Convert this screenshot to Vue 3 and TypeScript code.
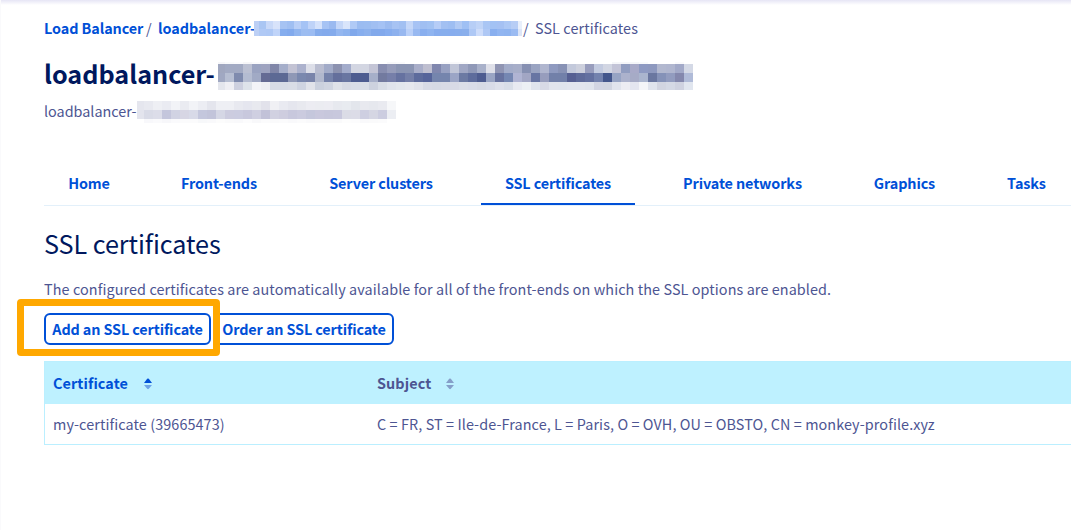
<script setup lang="ts">
interface Cell { x: number; y: number; w: number; h: number; fill: string }

function mosaic(rows: string[], ys: number[], first: number, size: number): Cell[] {
  return rows.flatMap((row, r) =>
    row.split(' ').map((c, i) => ({
      x: i === 0 ? 0 : first + (i - 1) * size,
      y: ys[r],
      w: i === 0 ? first : size,
      h: ys[r + 1] - ys[r],
      fill: '#' + c,
    })),
  )
}

const crumbCells = mosaic([
  'bdd0f5 aac6f3 c9d9f8 d8e3fa a6c3f3 a0bff2 b9cff7 a5c3f5 bfd3f8 d5e2fb a6c3f4 9bbaf0 c5d7f8 d9e5fb b0caf6 9bbcf1 9cbdf1 a1bff2 a5c2f4 9cbbf0 a7c3f3 a2c0f2 c5d7f8 a7c3f4 a0bff2 a2c2f3 b6cdf7 a2c0f2 9ebef2 b1caf4 9fc0f4 b7cef6 c0d4f7 aac6f4 a3c2f4 a5c1f3 adc8f5 b7cdf5 e8effb',
  'bdd0f5 b0c9f5 aec8f5 c0d4f9 85adee 82aaed 91b5ef 9dbdf1 9cbcf2 85acec 83aaec 84abec 94b7f0 8db3ef 80a8eb 87aeee 8cb1ed 82a9eb 82a9ec 86adef 8db1ee 98b8f0 bad0f8 98b9f1 89afef 8fb4f0 87adee 87aeed 87adee 88aeed 8aafec aec8f5 cddcfa afc8f5 89afef 91b5f1 8fb4f0 9bbbf2 dce5f7',
], [0, 8, 15], 5, 7)

const titleCells = mosaic([
  'f6f6f9 f9fafb fbfbfd f6f6f8 fafafc f8f9fb f7f8fa f8f9fb ffffff ffffff fafbfc ffffff f9fafb ffffff ffffff ffffff ffffff ffffff ffffff f8f8fa fafafc ffffff ffffff ffffff ffffff fafafc f9f9fb fafafb ffffff ffffff ffffff ffffff fafafc ffffff f8f9fa ffffff ffffff ffffff ffffff ffffff ffffff ffffff ffffff ffffff f5f6f9 f5f6f9 f5f6f9 f9fafb ffffff ffffff ffffff fafafc ffffff',
  'a0a7bf a2aac3 a2aac3 bbc0d2 9aa3c1 9ea3c0 8086a8 a5aeca c3c3d4 acb2cd dcdee8 b9bdd0 a2abc8 8c92b0 a3accb d3d6e2 d3d6e2 c4c5d6 888eb0 969cba 8b95b3 8b95b3 a9aec9 bfbfd0 8087ae 98a1c2 c1c6d8 a0a7c4 9099b8 a9b1ca dfe0e9 9095b3 a3acc9 a7aec9 8690b2 9aa4c2 b0b6cf 8f9ac0 8892b5 c3c9db cdd0dd 989dbd c3cbe0 d2d6e3 c3c4d7 919dc0 a8aac8 8e9ac2 8e99bf b2b8cf b0b6cf a2a9c8 d4d9e6',
  'a0a8c2 b6bed2 7f8bae b4bcd1 a1aac5 656b94 5c6994 5c6994 8f98b6 7a88ae 7984aa b1b8cd 7582aa 646f9c 6976a1 4d5c90 4d5c90 a6afc9 727a9f 767fa9 6672a0 747fa8 5d6b9c 56649a 7585ad 7585ad 9ba5c6 6c7aa3 5e6c9c 4e5c90 9aa5c4 67729f 7587b2 b0b4d3 a2a6c4 6775a3 979dbd 7280a9 7280a9 565f92 5e6a9a 6370a0 7382ae 43568c 97a4c4 acb2cc a6abc6 aab5ce 6a77a0 8592b8 929cbf 8488ad b0bbd8',
  'e4e6ed efeff4 cdd0df dee3ea f3f4f8 eeeff4 d7dce6 d7dce6 d9dde6 cfd4e1 e1e3ea cbd1de d0d5e1 dfe2e9 d8dbe5 d9dde7 dadee7 cdd2df d9dee7 e0e4ec e3e7ed e6e8ee e1e3eb d8dbe6 d6dae5 d8dbe6 d8dae6 dbdee8 d9dce8 d7dae5 d9dce8 dee1eb d9dee8 e8eaf1 edf0f4 dfe4ed d8dae6 e1e4ed e0e4ed e2e5ee e2e5ee e0e4ed d2d5e3 d1d5e1 e1e4ed ededf3 e4e6f0 f4f5f8 e0e4ed d2d5e1 d5d9e5 cfd2e0 e1e6ef',
], [0, 2, 11, 20, 28], 7, 9)

const nameCells = mosaic([
  'e5e6ee e8e9f0 eeeff4 eaebf2 f2f3f7 eaebf1 f2f3f7 ecedf3 e4e5ed eeeff4 eeeff4 e8e9f0 e5e6ef e8e9ef e2e2eb f0f0f4 e9eaf1 e5e6ee e8e9ef ececf2 ebecf1 ececf2 e7e9ef e8ebf0 e3e6ec e8e9ef e6e8ee e9eaf0 f6f7f9',
  'e3e4ed d9dbe7 dcdde9 c4c6dc d1d3e3 d7d6e4 d8dae8 c4c7dd c2c4da d5d7e5 ccccdf cbcce0 c8c8dd cfcfe1 c2c2d8 d1d1e1 cecddf c8c8dd cbcbdf c5c7dc c9c8dd c7c7dc c8c8dd dbdce6 dcdce7 cecfe1 d5d6e3 cccde0 eceef3',
  'ffffff f8f8fb fafafc f7f7fa fafafc fbfbfc fbfbfc f7f8fa f9f9fb fcfcfc fafafb f9f9fb fcfcfd f8f8fa fbfbfc fafafb fbfbfc f9f9fb fbfbfc f9f9fb fafafb fafafb fafafb fdfdfd fcfcfd f9f9fb fafafb fbfbfc ffffff',
], [0, 9, 18, 22], 7, 9)

const tabs = [
  { label: 'Home', cls: 't-home' },
  { label: 'Front-ends', cls: 't-front' },
  { label: 'Server clusters', cls: 't-server' },
  { label: 'SSL certificates', cls: 't-ssl active' },
  { label: 'Private networks', cls: 't-private' },
  { label: 'Graphics', cls: 't-graphics' },
  { label: 'Tasks', cls: 't-tasks' },
]
</script>

<template>
  <div class="page">
    <nav class="crumbs">
      <a class="c1">Load Balancer</a><span class="slash">/</span><a class="c2">loadbalancer-</a>
      <svg class="crumb-mask" width="268" height="15" shape-rendering="crispEdges">
        <rect v-for="(c, i) in crumbCells" :key="i" :x="c.x" :y="c.y" :width="c.w" :height="c.h" :fill="c.fill" />
      </svg>
      <span class="slash last">/</span><span class="c3">SSL certificates</span>
    </nav>
    <div class="title">
      <h1>loadbalancer-</h1>
      <svg class="title-mask" width="475" height="28" shape-rendering="crispEdges">
        <rect v-for="(c, i) in titleCells" :key="i" :x="c.x" :y="c.y" :width="c.w" :height="c.h" :fill="c.fill" />
      </svg>
    </div>
    <div class="name">
      <span>loadbalancer-</span>
      <svg class="name-mask" width="259" height="22" shape-rendering="crispEdges">
        <rect v-for="(c, i) in nameCells" :key="i" :x="c.x" :y="c.y" :width="c.w" :height="c.h" :fill="c.fill" />
      </svg>
    </div>
    <div class="tabs">
      <a v-for="t in tabs" :key="t.label" :class="['tab', t.cls]"><span>{{ t.label }}</span></a>
    </div>
    <h2>SSL certificates</h2>
    <p>The configured certificates are automatically available for all of the front-ends on which the SSL options are enabled.</p>
    <div class="actions">
      <button class="add"><span>Add an SSL certificate</span></button>
      <button class="order"><span>Order an SSL certificate</span></button>
      <div class="highlight"></div>
    </div>
    <div class="table">
      <div class="row head">
        <div class="cell first"><b>Certificate</b>
          <svg class="sort" width="8" height="12" viewBox="0 0 8 12"><path d="M0 5 3.2 .8Q4 0 4.8 .8L8 5Z" fill="#0050d7" /><path d="M0 7H8L4.8 10.8Q4 11.5 3.2 10.8Z" fill="#6ea3e6" /></svg>
        </div>
        <div class="cell"><b>Subject</b>
          <svg class="sort" width="8" height="12" viewBox="0 0 8 12"><path d="M0 5 3.2 .8Q4 0 4.8 .8L8 5Z" fill="#859fc9" /><path d="M0 7H8L4.8 10.8Q4 11.5 3.2 10.8Z" fill="#859fc9" /></svg>
        </div>
      </div>
      <div class="row body">
        <div class="cell first"><span>my-certificate (39665473)</span></div>
        <div class="cell"><span>C = FR, ST = Ile-de-France, L = Paris, O = OVH, OU = OBSTO, CN = monkey-profile.xyz</span></div>
      </div>
    </div>
  </div>
</template>

<style>
body { background: #fff; overflow: hidden; }
</style>
<style scoped>
.page {
  box-sizing: border-box; width: 1071px; height: 530px; padding: 17px 0 0 43px; overflow: hidden;
  border-left: 1px solid #fafafc;
  background: linear-gradient(#e6e5f5, #fff 5px);
  font: 14.4px/21px "Noto Sans CJK SC", "Open Sans", sans-serif; color: #4d5592;
  white-space: nowrap;
}
.crumbs { display: flex; height: 21px; color: #4d5592; }
.crumbs a { color: #0050d7; font-weight: 700; letter-spacing: -0.08px; }
.c1 { width: 102px; }
.slash { width: 12px; }
.crumbs .c2 { width: 96px; letter-spacing: -0.03px; }
.crumb-mask { margin-top: 4px; flex: none; }
.last { width: 12px; margin-left: 1px; }
.c3 { letter-spacing: 0.09px; }
.title { display: flex; margin-top: 15px; height: 40px; }
h1 { margin: 0; width: 174px; font-size: 25.2px; line-height: 40px; font-weight: 700; color: #00185e; }
.title-mask { margin-top: 9px; }
.name { display: flex; margin-top: 7px; height: 22px; }
.name span { width: 93px; }
.name-mask { margin-top: 1px; }
.tabs { display: flex; margin-top: 40px; height: 43px; border-bottom: 1px solid #e3f0fa; }
.tab { box-sizing: border-box; display: flex; justify-content: center; flex: none; height: 43px; line-height: 41px; color: #0050d7; font-weight: 700; letter-spacing: -0.12px; }
.t-home { width: 90px; }
.t-front { width: 124px; margin-left: 23px; }
.t-server { width: 152px; margin-left: 24px; }
.t-ssl { width: 154px; margin-left: 24px; }
.t-private { width: 166px; margin-left: 24.5px; }
.t-graphics { width: 110px; margin-left: 24px; }
.t-tasks { width: 88px; margin-left: 23px; }
.active { border-bottom: 2px solid #0050d7; }
h2 { margin: 20px 0 0; font-size: 25.2px; font-weight: 400; line-height: 34px; letter-spacing: -0.06px; color: #00185e; }
p { margin: 18px 0 0; line-height: 21px; letter-spacing: 0.087px; }
.actions { position: relative; display: flex; gap: 3px; margin-top: 14px; }
button { box-sizing: border-box; height: 32px; padding: 0; border: 2px solid #0050d7; border-radius: 6px; background: #fff; font: inherit; font-weight: 700; letter-spacing: -0.12px; color: #0050d7; line-height: 28px; }
.add { width: 167px; }
.order { width: 180px; }
.highlight { position: absolute; left: -27px; top: -14px; width: 203px; height: 57px; box-sizing: border-box; border: 7px solid #ffa800; border-radius: 4px; }
.table { margin-top: 16px; border: 1px solid #bbefff; border-right: 0; height: 82px; }
.row { display: flex; }
.head { height: 42px; background: #bef1ff; }
.body { height: 40px; }
.cell { display: flex; align-items: center; padding-left: 8px; letter-spacing: 0.09px; }
.cell b, .cell span { margin-top: -2px; }
.first { width: 316px; }
.head .first { color: #0050d7; }
.sort { margin-left: 15px; margin-top: 2px; }
.first .sort { margin-left: 16px; }
</style>
